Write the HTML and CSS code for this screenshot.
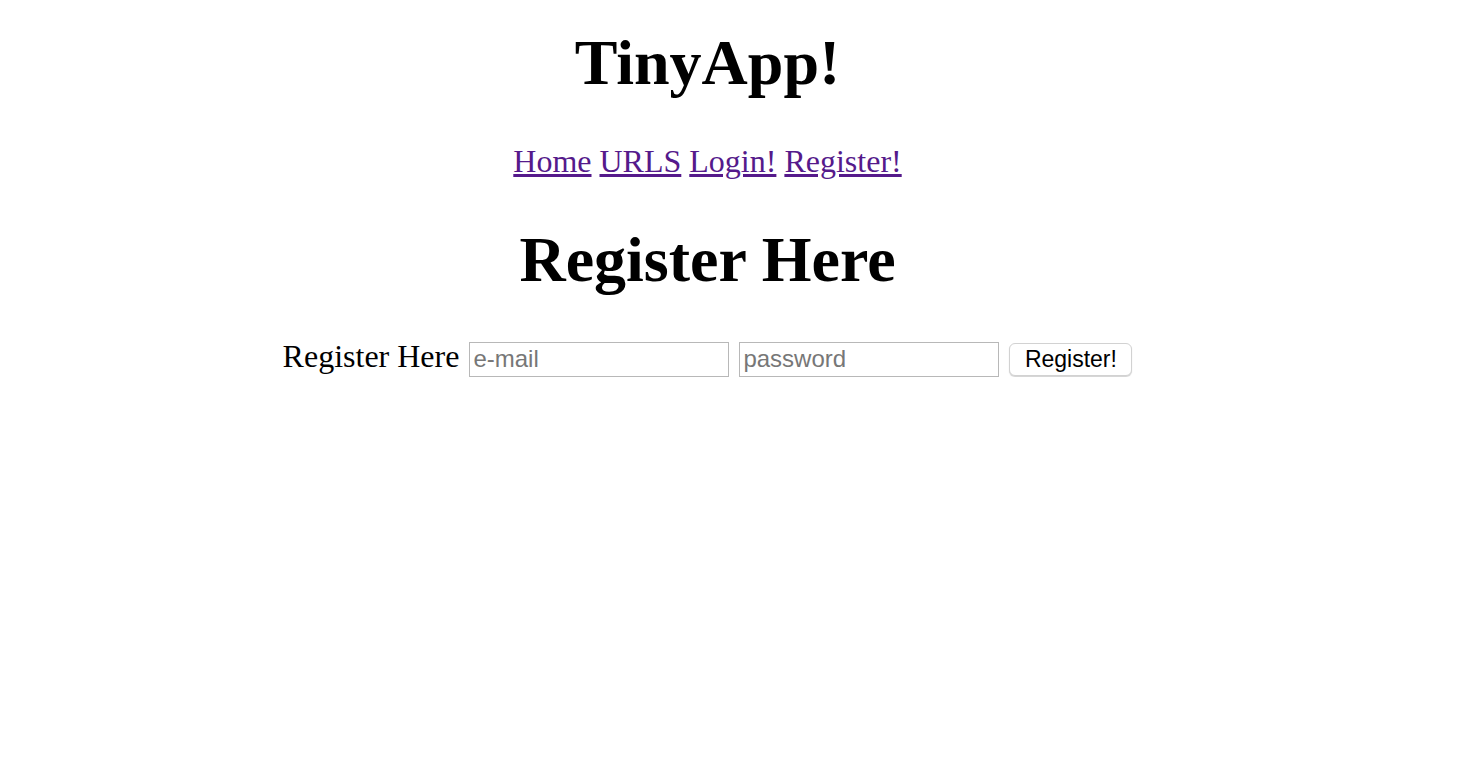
FILE: index.html
```html
<!DOCTYPE html>
<html>
<head>
<meta charset="utf-8">
<title>TinyApp</title>
<link rel="stylesheet" href="styles.css">
</head>
<body>
<div class="page">
  <h1 class="title">TinyApp!</h1>
  <nav class="nav">
    <a href="#">Home</a>
    <a href="#">URLS</a>
    <a href="#">Login!</a>
    <a href="#">Register!</a>
  </nav>
  <h1 class="heading">Register Here</h1>
  <form class="form">
    <label class="label">Register Here</label>
    <input class="field" type="text" placeholder="e-mail">
    <input class="field" type="password" placeholder="password">
    <button class="btn" type="button">Register!</button>
  </form>
</div>
</body>
</html>
```

FILE: styles.css
```css
html, body {
  margin: 0;
  padding: 0;
  background: #fff;
}
body {
  font-family: "Liberation Serif", "Times New Roman", serif;
  color: #000;
}
.page {
  width: 1415px;
  text-align: center;
}
.title {
  font-size: 64px;
  line-height: 74px;
  font-weight: bold;
  margin: 26px 0 43px;
}
.nav {
  font-size: 32px;
  line-height: 37px;
  margin: 0;
}
.nav a {
  color: #551a8b;
  text-decoration: underline;
}
.heading {
  font-size: 64px;
  line-height: 74px;
  font-weight: bold;
  margin: 43px 0 41px;
}
.form {
  display: flex;
  justify-content: center;
  align-items: baseline;
  gap: 10px;
  margin: 0;
}
.label {
  font-size: 32px;
  line-height: 37px;
}
.field {
  box-sizing: border-box;
  width: 260px;
  height: 35px;
  margin: 0;
  padding: 0 3px;
  border: 1px solid #b8b8b8;
  border-radius: 0;
  font-family: "Liberation Sans", Arial, sans-serif;
  font-size: 24px;
  color: #000;
  background: #fff;
  outline: none;
}
.field::placeholder {
  color: #777;
}
.btn {
  box-sizing: border-box;
  width: 123px;
  height: 33px;
  margin: 0;
  padding: 0;
  border: 1px solid #d2d2d2;
  border-radius: 6px;
  background: #fff;
  box-shadow: 0 1px 1px rgba(0, 0, 0, 0.18);
  font-family: "Liberation Sans", Arial, sans-serif;
  font-size: 23px;
  color: #000;
}
```
